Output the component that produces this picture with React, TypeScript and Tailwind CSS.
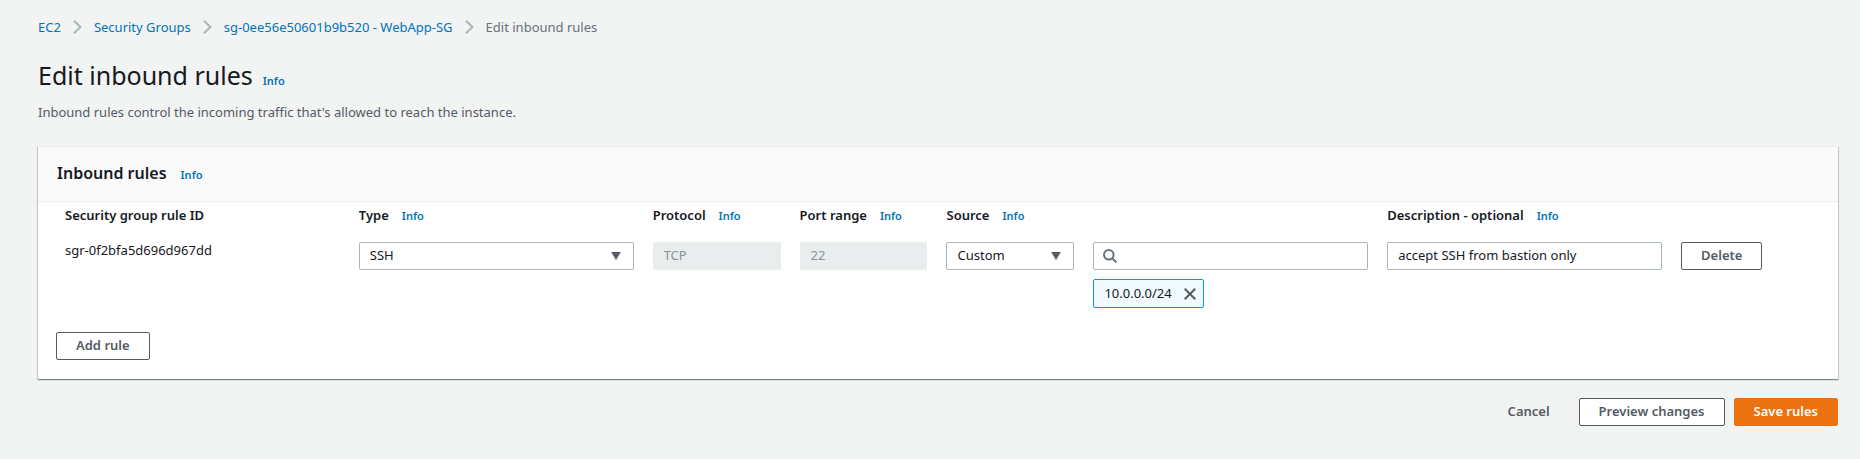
import type { ReactNode } from "react";

function Info({ topic }: { topic: string }) {
  return (
    <a href="#info" aria-label={`Info: ${topic}`} className="text-[11px] leading-4 font-semibold text-[#0073bb]">
      Info
    </a>
  );
}

function Chevron() {
  return (
    <svg aria-hidden="true" width="9" height="14" viewBox="0 0 9 14" className="mx-3 shrink-0" fill="none" stroke="#aab7b8" strokeWidth="2">
      <path d="M1 0.8 7.4 7 1 13.2" />
    </svg>
  );
}

function Field({ id, label, span, children }: { id: string; label: string; span: string; children: ReactNode }) {
  return (
    <div className={`min-w-0 ${span}`}>
      <div className="flex h-10 items-baseline gap-[13px] pt-[3px] whitespace-nowrap">
        <label htmlFor={id} className="font-semibold">
          {label}
        </label>
        <Info topic={label} />
      </div>
      {children}
    </div>
  );
}

const control = "block h-7 w-full rounded-xs border pb-[2px] text-[13px] leading-5 outline-none";
const enabled = "border-[#aab7b8] bg-white text-[#16191f]";
const disabled = "border-[#eaeded] bg-[#eaeded] text-[#879596]";

function Select({ id, options }: { id: string; options: string[] }) {
  return (
    <div className="relative">
      <select id={id} className={`${control} ${enabled} appearance-none px-[10px]`}>
        {options.map((o) => (
          <option key={o}>{o}</option>
        ))}
      </select>
      <svg aria-hidden="true" width="10" height="8" viewBox="0 0 10 8" className="pointer-events-none absolute top-[10px] right-[13px]">
        <path d="M0.5 0h9L5 7.6z" fill="#545b64" stroke="#545b64" strokeWidth="0.6" strokeLinejoin="round" />
      </svg>
    </div>
  );
}

function Button({ children, kind = "normal" }: { children: ReactNode; kind?: "normal" | "primary" | "link" }) {
  const look = {
    normal: "border-[#545b64] bg-white text-[#545b64]",
    primary: "border-[#ec7211] bg-[#ec7211] text-white",
    link: "border-transparent text-[#545b64]",
  }[kind];
  return (
    <button type="button" className={`h-7 rounded-xs border px-[19px] pb-[2px] text-[13px] leading-5 font-semibold whitespace-nowrap ${look}`}>
      {children}
    </button>
  );
}

export default function App() {
  return (
    <main className="min-h-screen bg-[#f2f3f3] pt-[17px] pr-[22px] pb-8 pl-[38px] font-['Noto_Sans',sans-serif] text-[13px] leading-5 text-[#16191f]">
      <nav aria-label="Breadcrumbs">
        <ol className="flex items-center whitespace-nowrap">
          <li className="flex items-center">
            <a href="#ec2" className="text-[#0073bb]">EC2</a>
            <Chevron />
          </li>
          <li className="flex items-center">
            <a href="#groups" className="text-[#0073bb]">Security Groups</a>
            <Chevron />
          </li>
          <li className="flex items-center">
            <a href="#group" className="text-[#0073bb]">sg-0ee56e50601b9b520 - WebApp-SG</a>
            <Chevron />
          </li>
          <li className="text-[#687078]" aria-current="page">Edit inbound rules</li>
        </ol>
      </nav>

      <header className="mt-[21px]">
        <div className="flex items-baseline gap-[10px]">
          <h1 className="text-[25px] leading-[34px]">Edit inbound rules</h1>
          <Info topic="Edit inbound rules" />
        </div>
        <p className="mt-[10px] text-[#545b64]">Inbound rules control the incoming traffic that's allowed to reach the instance.</p>
      </header>

      <section className="mt-6 border-t border-[#eaeded] bg-white shadow-[0_1px_1px_0_rgba(0,28,36,0.3),1px_1px_1px_0_rgba(0,28,36,0.15),-1px_1px_1px_0_rgba(0,28,36,0.15)]">
        <div className="flex h-[55px] items-center border-b border-[#eaeded] bg-[#fafafa] px-[19px] pb-[2px]">
          <div className="flex items-baseline gap-[14px]">
            <h2 className="text-base leading-6 font-semibold">Inbound rules</h2>
            <Info topic="Inbound rules" />
          </div>
        </div>

        <form className="pb-[19px]">
          <div className="grid grid-cols-12 gap-x-[19px] pr-[29px] pl-[27px]">
            <div className="col-span-2 min-w-0">
              <div className="h-10 pt-[3px] font-semibold whitespace-nowrap">Security group rule ID</div>
              <p className="leading-4 whitespace-nowrap">sgr-0f2bfa5d696d967dd</p>
            </div>
            <Field id="type" label="Type" span="col-span-2">
              <Select id="type" options={["SSH", "HTTP", "HTTPS"]} />
            </Field>
            <Field id="protocol" label="Protocol" span="col-span-1">
              <input id="protocol" disabled defaultValue="TCP" className={`${control} ${disabled} px-[10px]`} />
            </Field>
            <Field id="port" label="Port range" span="col-span-1">
              <input id="port" disabled defaultValue="22" className={`${control} ${disabled} px-[10px]`} />
            </Field>
            <Field id="source" label="Source" span="col-span-1">
              <Select id="source" options={["Custom", "Anywhere", "My IP"]} />
            </Field>
            <div className="col-span-2 min-w-0 pt-10">
              <div className="relative">
                <input type="search" aria-label="Source address" className={`${control} ${enabled} pr-[10px] pl-8`} />
                <svg aria-hidden="true" width="14" height="14" viewBox="0 0 14 14" className="pointer-events-none absolute top-[7px] left-[10px]" fill="none" stroke="#687078" strokeWidth="2">
                  <circle cx="5.8" cy="5.8" r="4.8" />
                  <path d="m9.2 9.2 4.2 4.2" />
                </svg>
              </div>
              <div className="mt-[9px] inline-flex h-[29px] items-center gap-3 rounded-xs border border-[#00a1c9] bg-[#f1faff] pr-[7px] pl-[10px] align-top">
                <span className="pb-[2px]">10.0.0.0/24</span>
                <button type="button" aria-label="Remove 10.0.0.0/24">
                  <svg aria-hidden="true" width="12" height="12" viewBox="0 0 12 12" fill="none" stroke="#545b64" strokeWidth="2">
                    <path d="m0.7 0.7 10.6 10.6M11.3 0.7 0.7 11.3" />
                  </svg>
                </button>
              </div>
            </div>
            <Field id="description" label="Description - optional" span="col-span-2">
              <input id="description" defaultValue="accept SSH from bastion only" className={`${control} ${enabled} px-[10px]`} />
            </Field>
            <div className="col-span-1 pt-10">
              <Button>Delete</Button>
            </div>
          </div>
          <div className="mt-6 px-[18px]">
            <Button>Add rule</Button>
          </div>
        </form>
      </section>

      <div className="mt-[19px] flex justify-end gap-[9px]">
        <Button kind="link">Cancel</Button>
        <Button>Preview changes</Button>
        <Button kind="primary">Save rules</Button>
      </div>
    </main>
  );
}
